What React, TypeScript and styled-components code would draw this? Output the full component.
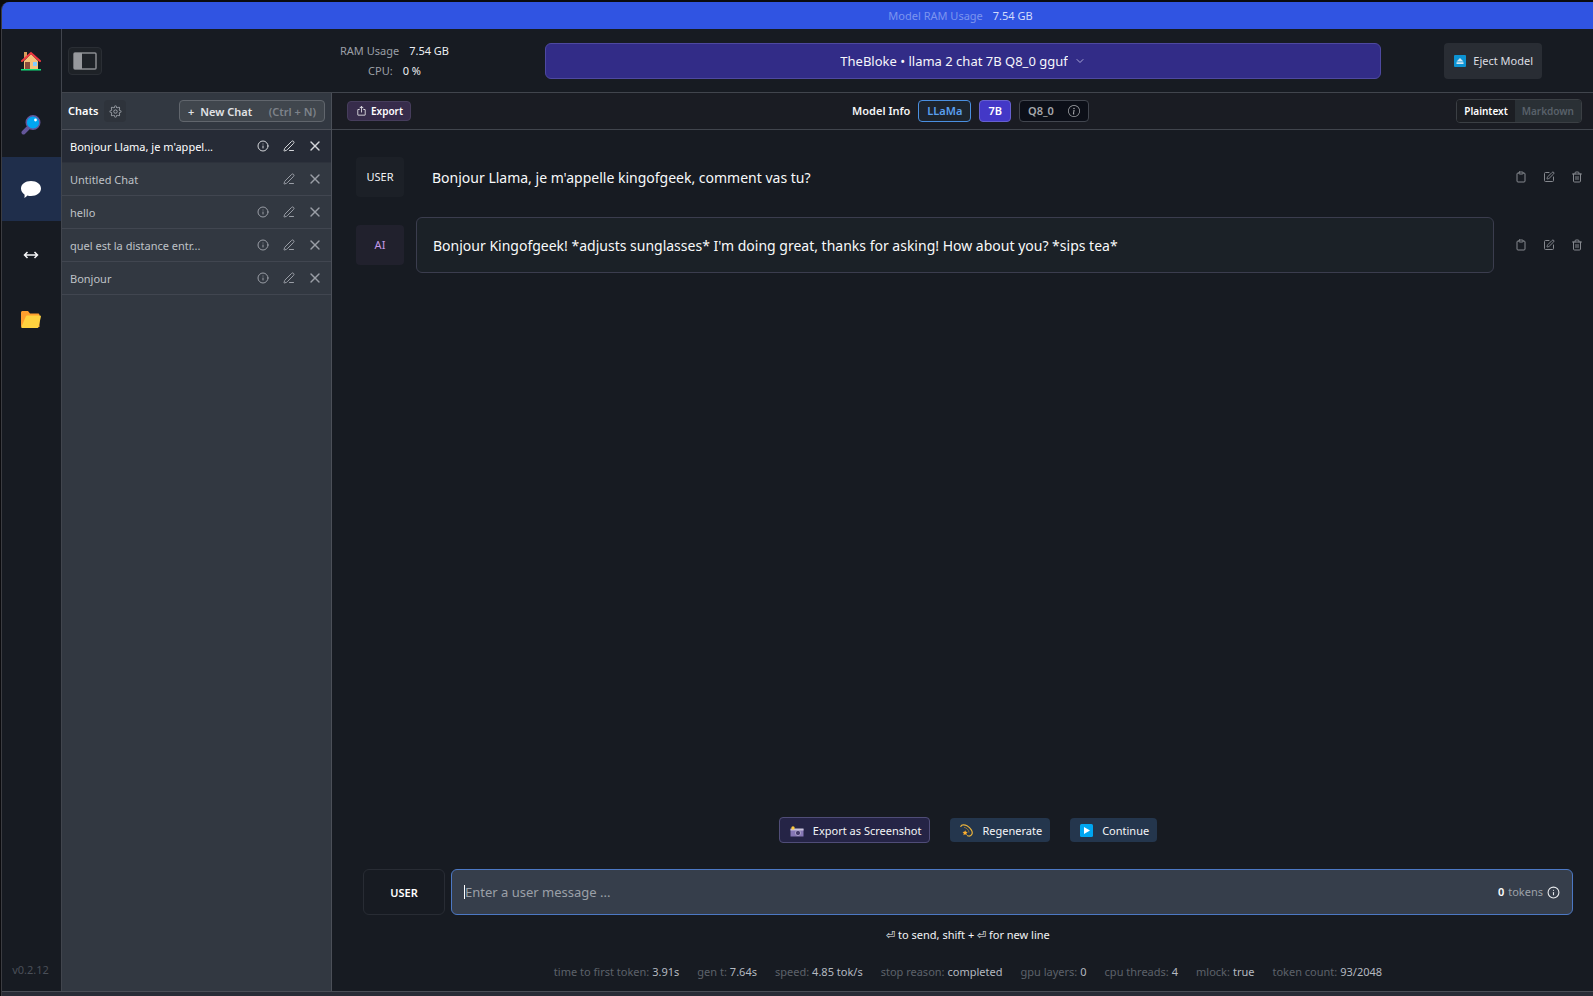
import React from 'react';
import styled, { createGlobalStyle, css } from 'styled-components';
import { ChevronDown, Clipboard, Info, PenLine, SquarePen, Trash2, X } from 'lucide-react';
import { RxGear, RxShare2 } from 'react-icons/rx';
import { BsInfoCircle } from 'react-icons/bs';

const GlobalStyle = createGlobalStyle`
  *, *::before, *::after { box-sizing: border-box; }
  body { margin: 0; background: #0b0b0e; }
  body, button, input, select { font-family: "Segoe UI", "Noto Sans", "Open Sans", sans-serif; }
  button, input, select { margin: 0; padding: 0; border: 0; background: none; color: inherit; font-size: inherit; }
  button { cursor: pointer; display: inline-flex; align-items: center; justify-content: center; white-space: nowrap; }
`;

const Screen = styled.div`
  min-height: 100vh;
  display: flex;
  padding: 2px 0 0 1px;
  background: #0b0b0e;
  color: #f3f4f6;
  font-size: 11px;
  line-height: 16px;
`;

const Window = styled.div`
  flex: 1;
  min-width: 0;
  display: flex;
  flex-direction: column;
  overflow: hidden;
  border-left: 1px solid #3b3c41;
  border-top-left-radius: 8px;
  background: #171b22;
`;

const TitleBar = styled.header`
  height: 27px;
  display: flex;
  align-items: center;
  justify-content: center;
  gap: 10px;
  padding-left: 326px;
  background: #3054e2;
  color: #7c94ef;
  strong { font-weight: 400; color: #d3dbfb; }
`;

const Body = styled.div`
  flex: 1;
  display: flex;
  min-height: 0;
`;

const BottomStrip = styled.footer`
  height: 5px;
  border-top: 1px solid #4a4d55;
  background: #292c36;
`;

const Sidebar = styled.nav`
  width: 60px;
  flex: none;
  display: flex;
  flex-direction: column;
  border-right: 1px solid #41454d;
`;

const NavLink = styled.a<{ $active?: boolean }>`
  height: 64px;
  display: flex;
  align-items: center;
  justify-content: center;
  padding-right: 2px;
  color: #f5f6f8;
  background: ${(p) => (p.$active ? '#1f2e4b' : 'transparent')};
`;

const Version = styled.span`
  margin-top: auto;
  padding: 0 2px 13px 0;
  text-align: center;
  color: #4a4f58;
`;

const Workspace = styled.div`
  flex: 1;
  min-width: 0;
  display: flex;
  flex-direction: column;
`;

const TopBar = styled.div`
  height: 64px;
  display: grid;
  grid-template-columns: 483px 1fr 212px;
  align-items: center;
  border-bottom: 1px solid #41454d;
`;

const TopLeft = styled.div`
  display: flex;
  align-items: center;
  justify-content: space-between;
  padding: 0 96px 0 6px;
`;

const PanelToggle = styled.button`
  width: 34px;
  height: 28px;
  border: 1px solid #2a2e34;
  border-radius: 4px;
  background: #1e2227;
`;

const Usage = styled.dl`
  margin: 0;
  line-height: 20px;
  color: #9b9fa6;
  div { display: flex; justify-content: center; gap: 10px; }
  dd { margin: 0; color: #eceef1; }
`;

const ModelPicker = styled.label`
  height: 36px;
  display: flex;
  align-items: center;
  justify-content: center;
  gap: 6px;
  border: 1px solid #4e49a0;
  border-radius: 6px;
  background: #322c87;
  color: #a9a6d6;
  font-size: 13px;
  select {
    appearance: none;
    field-sizing: content;
    color: #f6f6fb;
    line-height: 20px;
    outline: none;
  }
`;

const EjectButton = styled.button`
  justify-self: end;
  height: 36px;
  margin-right: 51px;
  padding: 0 9px 0 10px;
  gap: 7px;
  border-radius: 4px;
  background: #292d34;
  color: #dcdee2;
`;

const Split = styled.div`
  flex: 1;
  display: flex;
`;

const ChatsPanel = styled.aside`
  width: 270px;
  flex: none;
  border-right: 1px solid #4b4f58;
  background: #323841;
`;

const ChatsHeader = styled.div`
  height: 37px;
  display: flex;
  align-items: center;
  gap: 6px;
  padding: 0 6px;
  border-bottom: 1px solid #4b4f58;
  h2 { margin: 0; font-size: 11px; font-weight: 600; color: #fff; }
`;

const GearButton = styled.button`
  width: 22px;
  height: 22px;
  border-radius: 4px;
  background: #2e333b;
  color: #a7abb2;
`;

const NewChatButton = styled.button`
  height: 22px;
  width: 146px;
  margin-left: auto;
  padding: 0 8px;
  gap: 6px;
  border: 1px solid #61666d;
  border-radius: 4px;
  background: #40464d;
  color: #e1e3e6;
  font-weight: 600;
  kbd { margin-left: auto; font: inherit; color: #7e838a; }
`;

const ChatList = styled.ul`
  margin: 0;
  padding: 0;
  list-style: none;
`;

const ChatRow = styled.li<{ $selected?: boolean }>`
  height: 33px;
  display: flex;
  align-items: center;
  padding: 0 3px 0 8px;
  border-bottom: 1px solid #414650;
  color: #bfc2c7;
  ${(p) => p.$selected && css`
    background: #262b36;
    border-color: #2d323c;
    color: #fff;
  `}
`;

const ChatTitle = styled.button`
  flex: 1;
  justify-content: flex-start;
`;

const RowAction = styled.button<{ $bright?: boolean }>`
  width: 26px;
  height: 24px;
  color: ${(p) => (p.$bright ? '#d4d6da' : '#9a9ea6')};
`;

const Main = styled.main`
  flex: 1;
  min-width: 0;
  display: flex;
  flex-direction: column;
`;

const InfoBar = styled.div`
  height: 37px;
  display: grid;
  grid-template-columns: 1fr auto 1fr;
  align-items: center;
  padding: 0 11px 0 15px;
  border-bottom: 1px solid #41454d;
  background: #1a1c23;
`;

const ExportButton = styled.button`
  justify-self: start;
  height: 20px;
  padding: 0 7px 0 8px;
  gap: 4px;
  border: 1px solid #463d5c;
  border-radius: 4px;
  background: #372c4b;
  color: #fff;
  font-size: 10px;
  font-weight: 600;
`;

const ModelInfo = styled.div`
  display: flex;
  align-items: center;
  gap: 8px;
  padding-left: 12px;
  font-weight: 600;
`;

const tones = {
  family: css`border-color: #4a8fe0; background: #1d242d; color: #5a9fee;`,
  size: css`border-color: #6660cf; background: #4338c7; color: #fff;`,
  quant: css`border-color: #42464f; background: #0c0f18; color: #a6a8ac;`,
};

const Tag = styled.span<{ $tone: keyof typeof tones }>`
  height: 22px;
  display: flex;
  align-items: center;
  gap: 14px;
  padding: 0 8px;
  border: 1px solid;
  border-radius: 4px;
  ${(p) => tones[p.$tone]}
`;

const FormatToggle = styled.div`
  justify-self: end;
  height: 24px;
  display: flex;
  overflow: hidden;
  border: 1px solid #3b3f44;
  border-radius: 4px;
`;

const FormatOption = styled.button<{ $on?: boolean }>`
  padding: 0 7px;
  font-size: 10px;
  font-weight: 600;
  background: ${(p) => (p.$on ? '#1c1e23' : '#2a3035')};
  color: ${(p) => (p.$on ? '#fff' : '#59616a')};
`;

const Messages = styled.section`
  flex: 1;
  display: flex;
  flex-direction: column;
  gap: 12px;
  padding: 19px 5px 19px 24px;
`;

const MessageRow = styled.article`
  display: grid;
  grid-template-columns: 48px 1fr auto;
  align-items: center;
  gap: 12px;
`;

const RoleBadge = styled.span<{ $ai?: boolean }>`
  height: 40px;
  display: flex;
  align-items: center;
  justify-content: center;
  border-radius: 4px;
  background: ${(p) => (p.$ai ? '#21212d' : '#1c2027')};
  color: ${(p) => (p.$ai ? '#c49ae8' : '#f1f2f4')};
`;

const Bubble = styled.p<{ $framed?: boolean }>`
  margin: 0;
  min-height: 56px;
  padding: 18px 16px 16px;
  border-radius: 6px;
  font-size: 14px;
  line-height: 22px;
  color: #f8f9fa;
  ${(p) => p.$framed && css`
    padding: 17px 16px 15px;
    border: 1px solid #3b3d4e;
    background: #1b2127;
  `}
`;

const MessageActions = styled.div`
  display: flex;
  gap: 6px;
  padding-left: 4px;
  color: #85888e;
  button { width: 22px; height: 24px; }
`;

const Composer = styled.section`
  padding: 0 20px 11px 31px;
`;

const ActionBar = styled.div`
  display: flex;
  align-items: center;
  justify-content: center;
  gap: 20px;
  margin-bottom: 26px;
`;

const ActionButton = styled.button<{ $outlined?: boolean }>`
  height: 24px;
  padding: 0 8px 0 10px;
  gap: 9px;
  border-radius: 4px;
  background: #24364d;
  color: #f4f5f7;
  ${(p) => p.$outlined && css`
    height: 26px;
    border: 1px solid #504d78;
    background: #252446;
  `}
`;

const InputRow = styled.form`
  display: flex;
  gap: 6px;
  height: 46px;
`;

const RoleButton = styled.button`
  width: 82px;
  border: 1px solid #282c34;
  border-radius: 6px;
  color: #fff;
  font-weight: 600;
`;

const MessageField = styled.div`
  flex: 1;
  display: flex;
  align-items: center;
  padding: 0 12px;
  border: 1px solid #4c78c4;
  border-radius: 6px;
  background: #363e4b;
  input {
    flex: 1;
    min-width: 0;
    height: 100%;
    outline: none;
    font-size: 13px;
    color: #fff;
  }
  input::placeholder { color: #9ba0a8; opacity: 1; }
`;

const Caret = styled.span`
  width: 1px;
  height: 14px;
  background: #fff;
`;

const TokenCount = styled.span`
  display: flex;
  align-items: center;
  gap: 4px;
  color: #9ca1a9;
  strong { font-weight: 600; color: #fff; }
  svg { color: #e8eaed; }
`;

const Hint = styled.p`
  margin: 12px 0 21px;
  text-align: center;
`;

const Stats = styled.dl`
  margin: 0;
  display: flex;
  justify-content: center;
  gap: 18px;
  color: #5d626a;
  div { display: flex; gap: 3px; }
  dd { margin: 0; color: #b4b9c0; }
`;

const HouseIcon = () => (
  <svg width="20" height="20" viewBox="0 0 20 20" aria-hidden="true">
    <path d="M3 1h3v6H3z" fill="#d9a05c" />
    <path d="M3 10 10 3l7 7v9H3z" fill="#f5c27c" />
    <path d="m1 10 9-8 9 8" fill="none" stroke="#f0363f" strokeWidth="2" strokeLinecap="round" />
    <path d="M4 11h5v8H4z" fill="#8a4b3c" />
    <path d="M12 11h4v4h-4z" fill="#82ccff" />
    <path d="M0 18h20v1.5H0z" fill="#10e07a" />
  </svg>
);

const MagnifierIcon = () => (
  <svg width="20" height="20" viewBox="0 0 20 20" aria-hidden="true">
    <path d="m7 13-4.5 4.5" stroke="#64569a" strokeWidth="4" strokeLinecap="round" />
    <circle cx="12" cy="7.5" r="6.8" fill="#00a6f0" stroke="#64569a" strokeWidth="1.4" />
    <circle cx="14.5" cy="5" r="1.4" fill="#fff" />
  </svg>
);

const SpeechIcon = () => (
  <svg width="22" height="20" viewBox="0 0 22 20" aria-hidden="true">
    <path d="M11 2c5.8 0 10 3.200 10 7.500S16.800 17 11 17c-1.300 0-2.500-.1-3.600-.5C6.500 17.700 5.300 18.500 4.200 18.700c.5-1 .6-2.200.3-3.300C2.300 14 1 12 1 9.500 1 5.200 5.200 2 11 2z" fill="#fff" />
  </svg>
);

const ArrowsIcon = () => (
  <svg width="16" height="20" viewBox="0 0 16 20" fill="none" stroke="currentColor" strokeWidth="1.500" aria-hidden="true">
    <path d="M1.500 12h13M4.500 9l-3 3 3 3M11.500 9l3 3-3 3" />
  </svg>
);

const FolderIcon = () => (
  <svg width="20" height="24" viewBox="0 -5 20 24" aria-hidden="true">
    <path d="M0 2.500C0 1.700.7 1 1.500 1H7l2 2.500h8c.8 0 1.500.7 1.500 1.500v12H1a1 1 0 0 1-1-1z" fill="#ff9f2e" />
    <path d="M4.800 6.500c.2-.6.7-1 1.400-1H19c.7 0 1.100.6.9 1.200L17.500 17c-.1.600-.6 1-1.200 1H1c-.6 0-.8-.4-.7-.9z" fill="#ffd23f" />
  </svg>
);

const PanelIcon = () => (
  <svg width="24" height="18" viewBox="0 0 24 18" aria-hidden="true">
    <rect x="1" y="1" width="22" height="16" rx="1" fill="none" stroke="#8b8d91" strokeWidth="1.500" />
    <path d="M1 1h8v16H1z" fill="#97999d" />
  </svg>
);

const EjectIcon = () => (
  <svg width="12" height="12" viewBox="0 0 12 12" aria-hidden="true">
    <rect width="12" height="12" rx="1" fill="#0c93d3" />
    <path d="M6 3 9.500 6.500h-7zM2.500 7.300h7V9h-7z" fill="#cfe5f2" />
  </svg>
);

const CameraIcon = () => (
  <svg width="14" height="13" viewBox="0 0 14 13" aria-hidden="true">
    <path d="M.500 5h13v7.500H.500z" fill="#8677b5" />
    <path d="M.500 4.500h13V6.500H.500z" fill="#c9c3dc" />
    <circle cx="8" cy="9" r="2.600" fill="#453b6b" stroke="#bdb4d8" strokeWidth=".8" />
    <circle cx="3" cy="4" r="1.700" fill="#ffcb3d" />
  </svg>
);

const DizzyIcon = () => (
  <svg width="13" height="13" viewBox="0 0 13 13" aria-hidden="true">
    <path d="M.8 2.500C1.500.500 4.500.4 7 1.800c3.800 2.200 6 5.800 5 8.200-.8 1.900-2.800 2.300-4.500 1.700" fill="none" stroke="#e9b23c" strokeWidth="1.200" strokeLinecap="round" />
    <path d="M4 3.300c2.500.4 4.800 2.700 5 5.200" fill="none" stroke="#a8802f" strokeWidth=".8" />
    <path d="m5.200 6.200.7 1.600 1.800.2-1.300 1.300.4 1.900-1.700-.9-1.700.9.400-1.900L2.500 8l1.900-.2z" fill="#ffb02e" />
  </svg>
);

const PlayIcon = () => (
  <svg width="13" height="13" viewBox="0 0 13 13" aria-hidden="true">
    <rect width="13" height="13" rx="1.500" fill="#00a6f0" />
    <path d="M4 3v7l6-3.500z" fill="#fff" />
  </svg>
);

const chats = [
  { title: "Bonjour Llama, je m'appel...", info: true, selected: true },
  { title: 'Untitled Chat', info: false },
  { title: 'hello', info: true },
  { title: 'quel est la distance entr...', info: true },
  { title: 'Bonjour', info: true },
];

const messages = [
  { role: 'USER', text: "Bonjour Llama, je m'appelle kingofgeek, comment vas tu?" },
  { role: 'AI', text: "Bonjour Kingofgeek! *adjusts sunglasses* I'm doing great, thanks for asking! How about you? *sips tea*" },
];

const stats = [
  ['time to first token:', '3.91s'],
  ['gen t:', '7.64s'],
  ['speed:', '4.85 tok/s'],
  ['stop reason:', 'completed'],
  ['gpu layers:', '0'],
  ['cpu threads:', '4'],
  ['mlock:', 'true'],
  ['token count:', '93/2048'],
];

export default function App() {
  return (
    <Screen>
      <GlobalStyle />
      <Window>
        <TitleBar>
          <span>Model RAM Usage</span>
          <strong>7.54 GB</strong>
        </TitleBar>
        <Body>
          <Sidebar aria-label="Sections">
            <NavLink href="#home" aria-label="Home"><HouseIcon /></NavLink>
            <NavLink href="#search" aria-label="Search"><MagnifierIcon /></NavLink>
            <NavLink href="#chat" aria-label="Chat" $active><SpeechIcon /></NavLink>
            <NavLink href="#server" aria-label="Local server"><ArrowsIcon /></NavLink>
            <NavLink href="#models" aria-label="My models"><FolderIcon /></NavLink>
            <Version>v0.2.12</Version>
          </Sidebar>
          <Workspace>
            <TopBar>
              <TopLeft>
                <PanelToggle type="button" aria-label="Toggle panel"><PanelIcon /></PanelToggle>
                <Usage>
                  <div><dt>RAM Usage</dt><dd>7.54 GB</dd></div>
                  <div><dt>CPU:</dt><dd>0 %</dd></div>
                </Usage>
              </TopLeft>
              <ModelPicker>
                <select aria-label="Model">
                  <option>TheBloke • llama 2 chat 7B Q8_0 gguf</option>
                </select>
                <ChevronDown size={12} />
              </ModelPicker>
              <EjectButton type="button"><EjectIcon />Eject Model</EjectButton>
            </TopBar>
            <Split>
              <ChatsPanel>
                <ChatsHeader>
                  <h2>Chats</h2>
                  <GearButton type="button" aria-label="Chat settings"><RxGear size={13} /></GearButton>
                  <NewChatButton type="button">
                    <span>+</span>
                    <span>New Chat</span>
                    <kbd>(Ctrl + N)</kbd>
                  </NewChatButton>
                </ChatsHeader>
                <ChatList>
                  {chats.map((chat) => (
                    <ChatRow key={chat.title} $selected={chat.selected}>
                      <ChatTitle type="button">{chat.title}</ChatTitle>
                      {chat.info && (
                        <RowAction type="button" aria-label="Details" $bright={chat.selected}>
                          <Info size={12} strokeWidth={2} />
                        </RowAction>
                      )}
                      <RowAction type="button" aria-label="Rename" $bright={chat.selected}>
                        <PenLine size={12} strokeWidth={2} />
                      </RowAction>
                      <RowAction type="button" aria-label="Delete" $bright={chat.selected}>
                        <X size={16} strokeWidth={2} />
                      </RowAction>
                    </ChatRow>
                  ))}
                </ChatList>
              </ChatsPanel>
              <Main>
                <InfoBar>
                  <ExportButton type="button"><RxShare2 size={11} />Export</ExportButton>
                  <ModelInfo>
                    <span>Model Info</span>
                    <Tag $tone="family">LLaMa</Tag>
                    <Tag $tone="size">7B</Tag>
                    <Tag $tone="quant">Q8_0<BsInfoCircle size={12} /></Tag>
                  </ModelInfo>
                  <FormatToggle>
                    <FormatOption type="button" $on>Plaintext</FormatOption>
                    <FormatOption type="button">Markdown</FormatOption>
                  </FormatToggle>
                </InfoBar>
                <Messages>
                  {messages.map((message) => (
                    <MessageRow key={message.role}>
                      <RoleBadge $ai={message.role === 'AI'}>{message.role}</RoleBadge>
                      <Bubble $framed={message.role === 'AI'}>{message.text}</Bubble>
                      <MessageActions>
                        <button type="button" aria-label="Copy"><Clipboard size={12} strokeWidth={2} /></button>
                        <button type="button" aria-label="Edit"><SquarePen size={12} strokeWidth={2} /></button>
                        <button type="button" aria-label="Delete"><Trash2 size={12} strokeWidth={2} /></button>
                      </MessageActions>
                    </MessageRow>
                  ))}
                </Messages>
                <Composer>
                  <ActionBar>
                    <ActionButton type="button" $outlined><CameraIcon />Export as Screenshot</ActionButton>
                    <ActionButton type="button"><DizzyIcon />Regenerate</ActionButton>
                    <ActionButton type="button"><PlayIcon />Continue</ActionButton>
                  </ActionBar>
                  <InputRow onSubmit={(event) => event.preventDefault()}>
                    <RoleButton type="button">USER</RoleButton>
                    <MessageField>
                      <Caret />
                      <input type="text" aria-label="User message" placeholder="Enter a user message ..." />
                      <TokenCount><strong>0</strong>tokens<Info size={13} strokeWidth={2} /></TokenCount>
                    </MessageField>
                  </InputRow>
                  <Hint>⏎ to send, shift + ⏎ for new line</Hint>
                  <Stats>
                    {stats.map(([label, value]) => (
                      <div key={label}><dt>{label}</dt><dd>{value}</dd></div>
                    ))}
                  </Stats>
                </Composer>
              </Main>
            </Split>
          </Workspace>
        </Body>
        <BottomStrip />
      </Window>
    </Screen>
  );
}
